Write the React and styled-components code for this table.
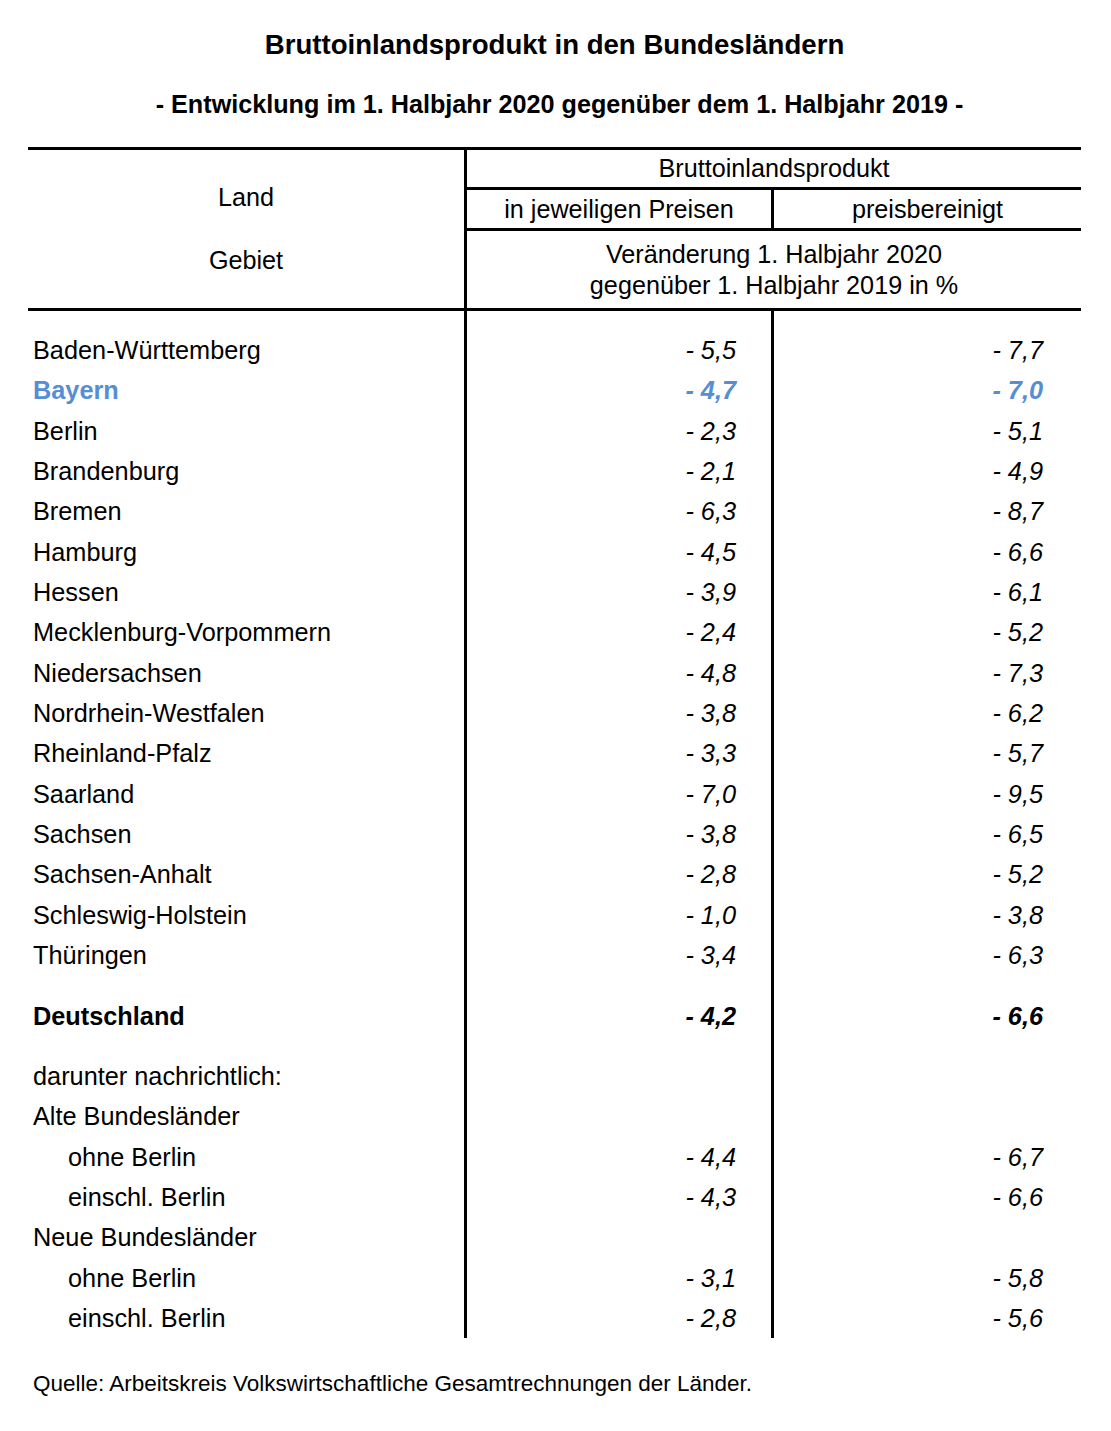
import React from "react";
import styled, { createGlobalStyle, css } from "styled-components";

const GlobalStyle = createGlobalStyle`
  html, body {
    margin: 0;
    padding: 0;
    background: #ffffff;
  }
  body {
    font-family: "Liberation Sans", Arial, Helvetica, sans-serif;
    color: #000;
  }
`;

const BLUE = "#558ed5";
const COLS = "439px 307px 307px";
const ROW_H = 40.35;

const Page = styled.div`
  width: 1111px;
  padding: 29px 0 0 28px;
  box-sizing: border-box;
`;

const Title = styled.h1`
  margin: 0;
  width: 1053px;
  text-align: center;
  font-size: 27.6px;
  font-weight: 700;
  line-height: 32px;
`;

const Subtitle = styled.h2`
  margin: 27px 0 0;
  width: 1053px;
  box-sizing: border-box;
  padding-left: 10px;
  text-align: center;
  font-size: 25.2px;
  font-weight: 700;
  line-height: 32px;
`;

const Table = styled.div`
  margin-top: 27px;
  width: 1053px;
`;

const Head = styled.div`
  display: grid;
  grid-template-columns: ${COLS};
  grid-template-rows: 40px 41px 77px;
  border-top: 3px solid #000;
  border-bottom: 3px solid #000;
  font-size: 25.2px;
`;

const LandCell = styled.div`
  grid-row: 1 / span 3;
  grid-column: 1;
  border-right: 3px solid #000;
  display: flex;
  flex-direction: column;
  align-items: center;
  justify-content: center;
  gap: 34px;
  line-height: 29px;
  padding-bottom: 1px;
`;

const HeadCell = styled.div`
  display: flex;
  flex-direction: column;
  align-items: center;
  justify-content: center;
  text-align: center;
  line-height: 31px;
  ${(p) => p.$span && css`grid-column: 2 / span 2;`}
  ${(p) => p.$divider && css`border-right: 3px solid #000;`}
  ${(p) => p.$rule && css`border-bottom: 3px solid #000;`}
`;

const Row = styled.div`
  display: grid;
  grid-template-columns: ${COLS};
  height: ${(p) => p.$h}px;
  font-size: 25.3px;
  line-height: ${(p) => p.$h}px;
  color: ${(p) => (p.$blue ? BLUE : "#000")};
  font-weight: ${(p) => (p.$bold ? 700 : 400)};
`;

const NameCell = styled.div`
  border-right: 3px solid #000;
  padding-left: ${(p) => (p.$indent ? 40 : 5)}px;
  white-space: nowrap;
`;

const NumCell = styled.div`
  text-align: right;
  font-style: italic;
  white-space: nowrap;
  padding-right: ${(p) => (p.$last ? 38 : 35)}px;
  ${(p) => p.$divider && css`border-right: 3px solid #000;`}
`;

const Source = styled.p`
  margin: 30px 0 0 5px;
  font-size: 22.5px;
  line-height: 32px;
`;

const rows = [
  { name: "Baden-Württemberg", a: "- 5,5", b: "- 7,7" },
  { name: "Bayern", a: "- 4,7", b: "- 7,0", blue: true, bold: true },
  { name: "Berlin", a: "- 2,3", b: "- 5,1" },
  { name: "Brandenburg", a: "- 2,1", b: "- 4,9" },
  { name: "Bremen", a: "- 6,3", b: "- 8,7" },
  { name: "Hamburg", a: "- 4,5", b: "- 6,6" },
  { name: "Hessen", a: "- 3,9", b: "- 6,1" },
  { name: "Mecklenburg-Vorpommern", a: "- 2,4", b: "- 5,2" },
  { name: "Niedersachsen", a: "- 4,8", b: "- 7,3" },
  { name: "Nordrhein-Westfalen", a: "- 3,8", b: "- 6,2" },
  { name: "Rheinland-Pfalz", a: "- 3,3", b: "- 5,7" },
  { name: "Saarland", a: "- 7,0", b: "- 9,5" },
  { name: "Sachsen", a: "- 3,8", b: "- 6,5" },
  { name: "Sachsen-Anhalt", a: "- 2,8", b: "- 5,2" },
  { name: "Schleswig-Holstein", a: "- 1,0", b: "- 3,8" },
  { name: "Thüringen", a: "- 3,4", b: "- 6,3" },
  { spacer: 20 },
  { name: "Deutschland", a: "- 4,2", b: "- 6,6", bold: true },
  { spacer: 20 },
  { name: "darunter nachrichtlich:", a: "", b: "" },
  { name: "Alte Bundesländer", a: "", b: "" },
  { name: "ohne Berlin", a: "- 4,4", b: "- 6,7", indent: true },
  { name: "einschl. Berlin", a: "- 4,3", b: "- 6,6", indent: true },
  { name: "Neue Bundesländer", a: "", b: "" },
  { name: "ohne Berlin", a: "- 3,1", b: "- 5,8", indent: true },
  { name: "einschl. Berlin", a: "- 2,8", b: "- 5,6", indent: true },
];

export default function App() {
  return (
    <>
      <GlobalStyle />
      <Page>
        <Title>Bruttoinlandsprodukt in den Bundesländern</Title>
        <Subtitle>
          - Entwicklung im 1. Halbjahr 2020 gegenüber dem 1. Halbjahr 2019 -
        </Subtitle>
        <Table>
          <Head>
            <LandCell>
              <span>Land</span>
              <span>Gebiet</span>
            </LandCell>
            <HeadCell $span $rule>
              Bruttoinlandsprodukt
            </HeadCell>
            <HeadCell $divider $rule>
              in jeweiligen Preisen
            </HeadCell>
            <HeadCell $rule>preisbereinigt</HeadCell>
            <HeadCell $span>
              <span>Veränderung 1. Halbjahr 2020</span>
              <span>gegenüber 1. Halbjahr 2019 in %</span>
            </HeadCell>
          </Head>
          <Row $h={19}>
            <NameCell />
            <NumCell $divider />
            <NumCell $last />
          </Row>
          {rows.map((r, i) =>
            r.spacer ? (
              <Row key={i} $h={r.spacer}>
                <NameCell />
                <NumCell $divider />
                <NumCell $last />
              </Row>
            ) : (
              <Row key={i} $h={ROW_H} $blue={r.blue} $bold={r.bold}>
                <NameCell $indent={r.indent}>{r.name}</NameCell>
                <NumCell $divider>{r.a}</NumCell>
                <NumCell $last>{r.b}</NumCell>
              </Row>
            )
          )}
        </Table>
        <Source>
          Quelle: Arbeitskreis Volkswirtschaftliche Gesamtrechnungen der Länder.
        </Source>
      </Page>
    </>
  );
}
